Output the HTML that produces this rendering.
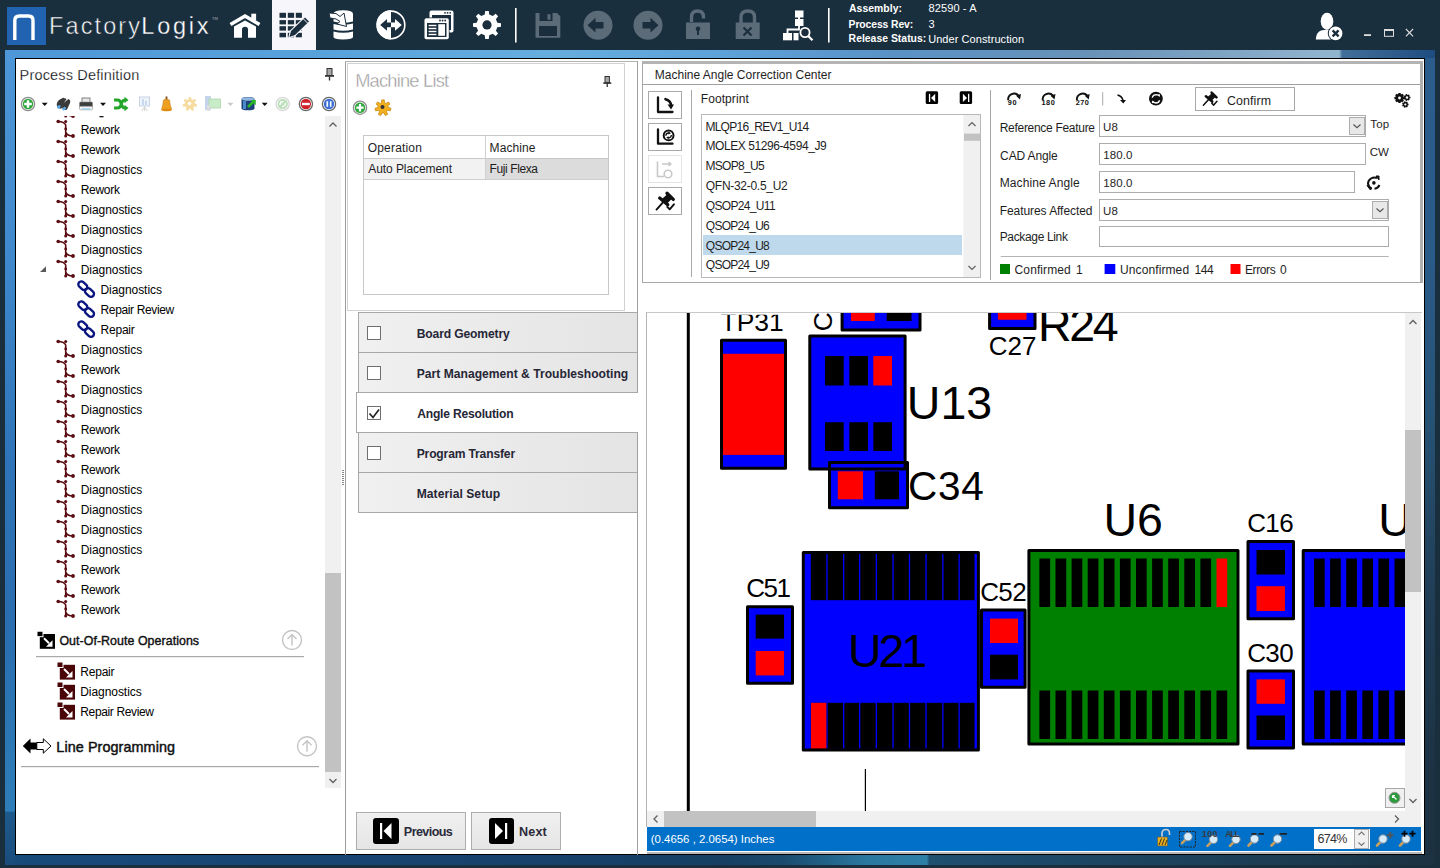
<!DOCTYPE html>
<html><head><meta charset="utf-8">
<style>
*{margin:0;padding:0;box-sizing:border-box}
html,body{width:1440px;height:868px;overflow:hidden;background:#1a2f3e;font-family:"Liberation Sans",sans-serif;font-size:12px;color:#1e1e1e;position:relative}
.a{position:absolute}
.t{position:absolute;white-space:nowrap}
svg{position:absolute;overflow:visible}
</style></head><body>
<div class="a" style="left:5px;top:50px;width:1430px;height:815px;background:linear-gradient(90deg,#4d97d8 0%,#58a2dc 22%,#66aede 38%,#5da2d9 50%,#5a92c6 62%,#6892b8 76%,#8db0cc 91%,#93b6d0 93.3%,#42709a 93.5%,#1f4c80 100%)"></div>
<div class="a" style="left:5px;top:58px;width:10px;height:807px;background:linear-gradient(180deg,#4d97d8 0%,#3f88cc 25%,#2f74b8 50%,#2a6eb0 70%,#2c78b4 85%,#2e7db8 93.3%,#1e5a8c 93.5%,#1a4c7c 100%)"></div>
<div class="a" style="left:1425px;top:58px;width:10px;height:807px;background:linear-gradient(180deg,#2c5c8c 0%,#2a5a88 25%,#265274 45%,#213f58 65%,#1d3446 85%,#1c3040 100%)"></div>
<div class="a" style="left:15px;top:855px;width:1420px;height:10px;background:linear-gradient(90deg,#184a7a 0%,#17436e 30%,#173f64 50%,#1a4a6e 54%,#2a78a0 60%,#2e80a8 64.2%,#1f5070 64.4%,#1d4a6a 70%,#1c4058 85%,#1c3242 100%)"></div>
<div class="a" style="left:15px;top:58px;width:1410px;height:797px;background:#fff;border:1px solid #000"></div>
<div class="a" style="left:7px;top:7px;width:39px;height:38px;background:#2163b0"></div>
<svg style="left:0;top:0" width="1440" height="50"><path d="M14.8 40 V20.5 Q14.8 16 19.5 16 H28.5 Q33 16 33 20.5 V40" fill="none" stroke="#fff" stroke-width="3.4"/><path d="M230.5 24.5 L245 16 L259.5 24.5" fill="none" stroke="#fff" stroke-width="3.6" stroke-linejoin="miter"/><rect x="251.3" y="13.7" width="4.8" height="6.5" fill="#fff"/><path d="M234 26.5 L245 20.5 L256 26.5 V37.8 H248 V29.5 Q248 26.8 245 26.8 Q242 26.8 242 29.5 V37.8 H234Z" fill="#fff"/><rect x="272" y="0" width="44" height="50" fill="#f7f7fb"/><rect x="279.5" y="12.8" width="6.5" height="5" fill="#1b2e3d"/><rect x="279.5" y="20.1" width="6.5" height="4.3" fill="#1b2e3d"/><rect x="279.5" y="26.2" width="6.5" height="4.4" fill="#1b2e3d"/><rect x="279.5" y="32.8" width="6.5" height="4.5" fill="#1b2e3d"/><rect x="287.8" y="12.8" width="6.3" height="5" fill="#1b2e3d"/><rect x="287.8" y="20.1" width="6.3" height="4.3" fill="#1b2e3d"/><rect x="287.8" y="26.2" width="6.3" height="4.4" fill="#1b2e3d"/><rect x="287.8" y="32.8" width="6.3" height="4.5" fill="#1b2e3d"/><rect x="295.8" y="12.8" width="6.1" height="5" fill="#1b2e3d"/><rect x="295.8" y="20.1" width="6.1" height="4.3" fill="#1b2e3d"/><rect x="295.8" y="26.2" width="6.1" height="4.4" fill="#1b2e3d"/><rect x="295.8" y="32.8" width="6.1" height="4.5" fill="#1b2e3d"/><path d="M289.5 37 L291 31 L305 17.5 L309 21.5 L295 35 Z" fill="#1b2e3d" stroke="#f7f7fb" stroke-width="2.2" stroke-linejoin="round"/><path d="M289.5 37 L291 31 L305 17.5 L309 21.5 L295 35 Z" fill="#1b2e3d"/><path d="M303.5 19 L307.5 23" stroke="#f7f7fb" stroke-width="1"/><path d="M333.5 14 Q333.5 10.3 343 10.3 Q353 10.3 353 14 V21.5 Q343 24 333.5 21.5 Z" fill="#fff"/><path d="M333.5 24 Q343 26 353 23.5 V29.5 Q343 32 333.5 29.5 Z" fill="#fff"/><path d="M333.5 31.5 Q343 34 353 31.5 V37 Q353 39.4 343 39.4 Q333.5 39.4 333.5 37 Z" fill="#fff"/><path d="M329 13 L336 13.5 L340 16.5 L344 13 L346.5 26.5 L337 24 L340 21.5 L336 19 L330 18 Z" fill="#fff" stroke="#1b2e3d" stroke-width="1"/><circle cx="391" cy="24.9" r="13.8" fill="#1b2e3d" stroke="#fff" stroke-width="1.6"/><path d="M391 10.3 A14.6 14.6 0 0 0 391 39.5 Z" fill="#fff"/><path d="M380.2 24.9 L387 19 V22.5 H391 V27.3 H387 V30.8 Z" fill="#1b2e3d"/><path d="M401.8 24.9 L395 19 V22.5 H391 V27.3 H395 V30.8 Z" fill="#fff"/><rect x="429.5" y="10.5" width="24" height="22" rx="2" fill="#fff"/><rect x="432" y="15" width="19" height="15" fill="#1b2e3d"/><circle cx="445" cy="12.8" r="0.9" fill="#1b2e3d"/><circle cx="447.6" cy="12.8" r="0.9" fill="#1b2e3d"/><circle cx="450.2" cy="12.8" r="0.9" fill="#1b2e3d"/><rect x="423.5" y="17.5" width="26" height="22.5" rx="2" fill="#1b2e3d"/><rect x="424.5" y="18.3" width="24.3" height="21" rx="1.8" fill="#fff"/><circle cx="440" cy="20.5" r="0.9" fill="#1b2e3d"/><circle cx="442.6" cy="20.5" r="0.9" fill="#1b2e3d"/><circle cx="445.2" cy="20.5" r="0.9" fill="#1b2e3d"/><rect x="427" y="23" width="19.5" height="14" fill="#1b2e3d"/><rect x="438.3" y="24.2" width="6.7" height="11.6" fill="#fff"/><rect x="428.6" y="24.8" width="7.8" height="1.4" fill="#fff"/><rect x="428.6" y="27.8" width="7.8" height="1.4" fill="#fff"/><rect x="428.6" y="30.8" width="7.8" height="1.4" fill="#fff"/><rect x="428.6" y="33.8" width="7.8" height="1.4" fill="#fff"/><path d="M497.36 22.67 L500.99 23.13 L500.99 26.67 L497.36 27.13 L495.90 30.65 L498.14 33.54 L495.64 36.04 L492.75 33.80 L489.23 35.26 L488.77 38.89 L485.23 38.89 L484.77 35.26 L481.25 33.80 L478.36 36.04 L475.86 33.54 L478.10 30.65 L476.64 27.13 L473.01 26.67 L473.01 23.13 L476.64 22.67 L478.10 19.15 L475.86 16.26 L478.36 13.76 L481.25 16.00 L484.77 14.54 L485.23 10.91 L488.77 10.91 L489.23 14.54 L492.75 16.00 L495.64 13.76 L498.14 16.26 L495.90 19.15Z" fill="#fff"/><circle cx="487" cy="24.9" r="4.6" fill="#1b2e3d"/><rect x="515" y="8" width="1.6" height="34.5" fill="#fff"/><path d="M535.5 13 H557 L560.3 16.3 V37.8 H535.5 Z" fill="#5b6b78"/><rect x="539.5" y="13" width="13" height="8" fill="#1b2e3d"/><rect x="547.5" y="14.2" width="3" height="5.6" fill="#5b6b78"/><rect x="539" y="26" width="18" height="10" fill="#1b2e3d"/><rect x="539" y="27" width="18" height="9" rx="0.5" fill="#1b2e3d"/><circle cx="598" cy="25.2" r="14.5" fill="#5b6b78"/><path d="M587.5 25.2 L595.5 17.8 V22 H603.5 V28.4 H595.5 V32.6 Z" fill="#1b2e3d"/><circle cx="648" cy="25.2" r="14.5" fill="#5b6b78"/><path d="M658.5 25.2 L650.5 17.8 V22 H642.5 V28.4 H650.5 V32.6 Z" fill="#1b2e3d"/><path d="M691.5 22 V17 Q691.5 11 697.5 11 Q703.5 11 703.5 17 V18.5" fill="none" stroke="#5b6b78" stroke-width="3.4"/><rect x="686" y="22.5" width="24" height="16.5" fill="#5b6b78"/><circle cx="698" cy="28.8" r="2.3" fill="#1b2e3d"/><rect x="697" y="29" width="2" height="6" fill="#1b2e3d"/><path d="M741 23 V17 Q741 11 747.8 11 Q754.5 11 754.5 17 V23" fill="none" stroke="#5b6b78" stroke-width="3.4"/><rect x="735.7" y="22.5" width="24" height="16.5" fill="#5b6b78"/><path d="M743.5 27.5 L751.5 35.5 M751.5 27.5 L743.5 35.5" stroke="#1b2e3d" stroke-width="2.2"/><rect x="795" y="10.5" width="8.5" height="7" fill="#fff"/><rect x="795" y="19" width="8.5" height="7" fill="#fff"/><rect x="798" y="17" width="2" height="3" fill="#fff"/><rect x="783" y="33" width="9" height="7.3" fill="#fff"/><rect x="793.5" y="33" width="5" height="7.3" fill="#fff"/><path d="M787.5 33 V29.5 H799 V26" fill="none" stroke="#fff" stroke-width="1.8"/><circle cx="805" cy="32.5" r="4.6" fill="#1b2e3d" stroke="#fff" stroke-width="1.8"/><path d="M808 35.8 L812.5 40.3" stroke="#fff" stroke-width="2.2"/><rect x="828" y="8" width="1.6" height="34.5" fill="#fff"/><ellipse cx="1327" cy="21.2" rx="6.3" ry="8.5" fill="#fff"/><path d="M1315.8 39.5 Q1316 32.5 1321 30.5 L1327 29.5 L1333 30.5 Q1337 32 1337.5 39.5 Z" fill="#fff"/><circle cx="1335.6" cy="33.4" r="7.8" fill="#1b2e3d"/><circle cx="1335.6" cy="33.4" r="6.8" fill="#fff"/><path d="M1332.6 30.4 L1338.6 36.4 M1338.6 30.4 L1332.6 36.4" stroke="#1b2e3d" stroke-width="2.3"/><rect x="1364" y="34.2" width="7" height="1.8" fill="#ddd"/><rect x="1384.5" y="29.5" width="9" height="6.8" fill="none" stroke="#ddd" stroke-width="1"/><rect x="1384" y="29" width="10" height="2" fill="#ddd"/><path d="M1405.9 29 L1413.1 36.3 M1413.1 29 L1405.9 36.3" stroke="#ddd" stroke-width="1.1"/></svg>
<div class="t" style="left:49.07px;top:15.11px;font-size:23.5px;line-height:23.5px;letter-spacing:2.104px;color:#fff;-webkit-text-stroke:0.55px #1b2e3d">Factory</div>
<div class="t" style="left:141.37px;top:15.11px;font-size:23.5px;line-height:23.5px;letter-spacing:2.743px;color:#fff;-webkit-text-stroke:0.3px #1b2e3d">Logix</div>
<div class="t" style="left:212px;top:17px;font-size:4px;line-height:4px;color:#aab">TM</div><div class="t" style="left:849.05px;top:3.80px;font-size:10.4px;line-height:10.4px;letter-spacing:0.043px;font-weight:bold;color:#fff">Assembly:</div>
<div class="t" style="left:848.61px;top:19.50px;font-size:10.4px;line-height:10.4px;letter-spacing:-0.111px;font-weight:bold;color:#fff">Process Rev:</div>
<div class="t" style="left:848.61px;top:34.40px;font-size:10.4px;line-height:10.4px;letter-spacing:0.016px;font-weight:bold;color:#fff">Release Status:</div>
<div class="t" style="left:928.53px;top:3.29px;font-size:11px;line-height:11px;letter-spacing:0.113px;color:#fff">82590 - A</div>
<div class="t" style="left:928.58px;top:18.99px;font-size:11px;line-height:11px;color:#fff">3</div>
<div class="t" style="left:928.15px;top:33.89px;font-size:11px;line-height:11px;letter-spacing:0.070px;color:#fff">Under Construction</div>
<div class="t" style="left:19.61px;top:67.73px;font-size:14.5px;line-height:14.5px;letter-spacing:0.162px;color:#000;-webkit-text-stroke:0.25px #fff">Process Definition</div>
<svg style="left:0;top:0" width="1" height="1"><rect x="327" y="68.5" width="5" height="7" fill="#a8a8a8" stroke="#333" stroke-width="1"/><rect x="325" y="75" width="9" height="1.8" fill="#333"/><rect x="328.8" y="76.5" width="1.4" height="4" fill="#333"/><circle cx="28" cy="104" r="6.6" fill="#fff" stroke="#8c8c8c" stroke-width="1.3"/><circle cx="28" cy="104" r="5.2" fill="#2ca53a"/><path d="M24.2 104 H31.8 M28 100.2 V107.8" stroke="#fff" stroke-width="2.4"/><path d="M41.7 102.8 H47.7 L44.7 106Z" fill="#111"/><path d="M100 102.8 H106 L103 106Z" fill="#111"/><path d="M261.7 102.8 H267.7 L264.7 106Z" fill="#111"/><path d="M227.5 102.8 H233.5 L230.5 106Z" fill="#c8c8c8"/><path d="M57 106 Q56 103 59 100 L63 97.8 Q66 98 65 101 L62 108 Q59 110 57 106Z" fill="#3a3a3a"/><path d="M62 108 Q62 104 66 101 L68.5 99 Q71 100 70 103 L67 109.5 Q64 111 62 108Z" fill="#3a3a3a"/><path d="M63 101 L66 99" stroke="#3a3a3a" stroke-width="2"/><ellipse cx="58.8" cy="106.8" rx="2" ry="1.5" fill="#5aa8e8" transform="rotate(-40 58.8 106.8)"/><ellipse cx="64.2" cy="108.6" rx="2" ry="1.5" fill="#5aa8e8" transform="rotate(-40 64.2 108.6)"/><rect x="82" y="98" width="8" height="4.5" fill="#e8e8e8" stroke="#666" stroke-width="0.8"/><rect x="79.5" y="102" width="13" height="5.5" rx="1" fill="#3c3c3c" stroke="#888" stroke-width="0.6"/><rect x="79.5" y="106.3" width="13" height="3.5" rx="1" fill="#f4f4f4" stroke="#888" stroke-width="0.6"/><rect x="82" y="108.2" width="8" height="1.4" fill="#9ad0f0"/><path d="M114 100 H117.5 Q120 100 121 103 L122 106 Q123 108 125 108 H126" fill="none" stroke="#22a52a" stroke-width="3"/><path d="M114 108 H117.5 Q120 108 121 105 L122 102 Q123 100 125 100 H126" fill="none" stroke="#22a52a" stroke-width="3"/><path d="M124.5 96.8 L128.5 100 L124.5 103.2Z M124.5 104.8 L128.5 108 L124.5 111.2Z" fill="#22a52a"/><rect x="139.5" y="97" width="10" height="9" fill="#eef3fa" stroke="#c8d4e6" stroke-width="1"/><rect x="142" y="99" width="2" height="6" fill="#c8d8ee"/><rect x="145" y="101" width="2" height="4" fill="#c8d8ee"/><path d="M144.5 106 V111 M141.5 111 L144.5 107 L147.5 111" stroke="#d4d4d4" fill="none"/><path d="M166.5 96.5 V100" stroke="#7a4a1a" stroke-width="1.8"/><path d="M163.5 100 Q166.5 98.5 169.5 100 Q170 106 171.7 109.5 H161.5 Q163 106 163.5 100Z" fill="#f0a020" stroke="#c87810" stroke-width="0.6"/><ellipse cx="166.6" cy="110" rx="5" ry="1.2" fill="#e08a10"/><path d="M188.4 99.2 L188.8 96.9 L191.0 96.9 L191.4 99.2 L192.7 99.9 L194.7 98.7 L196.2 100.5 L194.6 102.2 L194.9 103.6 L197.1 104.5 L196.6 106.7 L194.2 106.5 L193.3 107.7 L194.0 109.9 L192.0 110.9 L190.6 108.9 L189.2 108.9 L187.8 110.9 L185.8 109.9 L186.5 107.7 L185.6 106.5 L183.2 106.7 L182.7 104.5 L184.9 103.6 L185.2 102.2 L183.6 100.5 L185.1 98.7 L187.1 99.9Z" fill="#f6dca0"/><circle cx="189.5" cy="103.5" r="1.8" fill="#fff"/><rect x="205" y="96" width="6" height="14" fill="#c4d4ec"/><rect x="209" y="99" width="11.5" height="9" fill="#c8ecc8" stroke="#b0d4b0" stroke-width="0.8"/><rect x="207" y="105" width="3" height="6" fill="#ddd"/><path d="M241.5 99 Q241.5 97 248 97 Q254.5 97 254.5 99 V108.5 Q254.5 110.3 248 110.3 Q241.5 110.3 241.5 108.5Z" fill="#1d3f7a"/><ellipse cx="248" cy="99" rx="6.5" ry="1.8" fill="#8fb8e0"/><rect x="243" y="101" width="3" height="8" fill="#4a88c8"/><path d="M248 107 L253.5 101.5" stroke="#2ab52a" stroke-width="2.6"/><path d="M250.5 100 H255.8 V105.3Z" fill="#2ab52a"/><circle cx="282.7" cy="104" r="6.6" fill="#fff" stroke="#d8d8d8" stroke-width="1.3"/><circle cx="282.7" cy="104" r="5.2" fill="#bde0bd"/><path d="M280 105 Q280 101.5 283.5 101.5 M285.5 103 Q285.5 106.5 282 106.5" stroke="#fff" stroke-width="1.3" fill="none"/><circle cx="305.9" cy="104" r="6.6" fill="#fff" stroke="#6a6a6a" stroke-width="1.3"/><circle cx="305.9" cy="104" r="5.2" fill="#d0202a"/><rect x="302" y="102.8" width="7.8" height="2.4" fill="#fff"/><circle cx="329" cy="104" r="6.6" fill="#fff" stroke="#6a6a6a" stroke-width="1.3"/><circle cx="329" cy="104" r="5.2" fill="#3c70d8"/><path d="M327.3 101.2 V106.8 M330.7 101.2 V106.8" stroke="#fff" stroke-width="1.6"/></svg>
<div class="a" style="left:325px;top:116px;width:16px;height:672px;background:#f0f0f0"></div>
<div class="a" style="left:325px;top:573px;width:16px;height:199px;background:#c2c2c2"></div>
<svg style="left:0;top:0" width="1" height="1"><path d="M329.5 126.5 L333 123 L336.5 126.5" fill="none" stroke="#606060" stroke-width="1.3"/><path d="M329.5 779 L333 782.5 L336.5 779" fill="none" stroke="#606060" stroke-width="1.3"/><rect x="342" y="470" width="2" height="1" fill="#8a8a8a"/><rect x="342" y="472" width="2" height="1" fill="#8a8a8a"/><rect x="342" y="474" width="2" height="1" fill="#8a8a8a"/><rect x="342" y="476" width="2" height="1" fill="#8a8a8a"/><rect x="342" y="478" width="2" height="1" fill="#8a8a8a"/><rect x="342" y="480" width="2" height="1" fill="#8a8a8a"/><rect x="342" y="482" width="2" height="1" fill="#8a8a8a"/><rect x="342" y="484" width="2" height="1" fill="#8a8a8a"/></svg>
<div class="t" style="left:80.72px;top:123.59px;font-size:12px;line-height:12px;letter-spacing:-0.284px;color:#000">Rework</div>
<div class="t" style="left:80.72px;top:143.59px;font-size:12px;line-height:12px;letter-spacing:-0.284px;color:#000">Rework</div>
<div class="t" style="left:80.72px;top:163.59px;font-size:12px;line-height:12px;letter-spacing:-0.061px;color:#000">Diagnostics</div>
<div class="t" style="left:80.72px;top:183.59px;font-size:12px;line-height:12px;letter-spacing:-0.284px;color:#000">Rework</div>
<div class="t" style="left:80.72px;top:203.59px;font-size:12px;line-height:12px;letter-spacing:-0.061px;color:#000">Diagnostics</div>
<div class="t" style="left:80.72px;top:223.59px;font-size:12px;line-height:12px;letter-spacing:-0.061px;color:#000">Diagnostics</div>
<div class="t" style="left:80.72px;top:243.59px;font-size:12px;line-height:12px;letter-spacing:-0.061px;color:#000">Diagnostics</div>
<div class="t" style="left:80.72px;top:263.59px;font-size:12px;line-height:12px;letter-spacing:-0.061px;color:#000">Diagnostics</div>
<div class="t" style="left:100.52px;top:283.59px;font-size:12px;line-height:12px;letter-spacing:-0.061px;color:#000">Diagnostics</div>
<div class="t" style="left:100.52px;top:303.59px;font-size:12px;line-height:12px;letter-spacing:-0.365px;color:#000">Repair Review</div>
<div class="t" style="left:100.52px;top:323.59px;font-size:12px;line-height:12px;letter-spacing:-0.215px;color:#000">Repair</div>
<div class="t" style="left:80.72px;top:343.59px;font-size:12px;line-height:12px;letter-spacing:-0.061px;color:#000">Diagnostics</div>
<div class="t" style="left:80.72px;top:363.59px;font-size:12px;line-height:12px;letter-spacing:-0.284px;color:#000">Rework</div>
<div class="t" style="left:80.72px;top:383.59px;font-size:12px;line-height:12px;letter-spacing:-0.061px;color:#000">Diagnostics</div>
<div class="t" style="left:80.72px;top:403.59px;font-size:12px;line-height:12px;letter-spacing:-0.061px;color:#000">Diagnostics</div>
<div class="t" style="left:80.72px;top:423.59px;font-size:12px;line-height:12px;letter-spacing:-0.284px;color:#000">Rework</div>
<div class="t" style="left:80.72px;top:443.59px;font-size:12px;line-height:12px;letter-spacing:-0.284px;color:#000">Rework</div>
<div class="t" style="left:80.72px;top:463.59px;font-size:12px;line-height:12px;letter-spacing:-0.284px;color:#000">Rework</div>
<div class="t" style="left:80.72px;top:483.59px;font-size:12px;line-height:12px;letter-spacing:-0.061px;color:#000">Diagnostics</div>
<div class="t" style="left:80.72px;top:503.59px;font-size:12px;line-height:12px;letter-spacing:-0.061px;color:#000">Diagnostics</div>
<div class="t" style="left:80.72px;top:523.59px;font-size:12px;line-height:12px;letter-spacing:-0.061px;color:#000">Diagnostics</div>
<div class="t" style="left:80.72px;top:543.59px;font-size:12px;line-height:12px;letter-spacing:-0.061px;color:#000">Diagnostics</div>
<div class="t" style="left:80.72px;top:563.59px;font-size:12px;line-height:12px;letter-spacing:-0.284px;color:#000">Rework</div>
<div class="t" style="left:80.72px;top:583.59px;font-size:12px;line-height:12px;letter-spacing:-0.284px;color:#000">Rework</div>
<div class="t" style="left:80.72px;top:603.59px;font-size:12px;line-height:12px;letter-spacing:-0.284px;color:#000">Rework</div>
<svg style="left:0;top:0" width="1" height="1"><g><clipPath id="tc"><rect x="20" y="116" width="300" height="10"/></clipPath></g><g clip-path="url(#tc)"><g transform="translate(57,100)" fill="#5a0c10" stroke="#5a0c10"><path d="M1.2 1.5 Q7 1.6 8.7 5 V16 M8.7 12 Q10 16 16 16" fill="none" stroke-width="1.6"/><circle cx="1.2" cy="1.5" r="1.8" stroke="none"/><circle cx="8.7" cy="1.5" r="1.5" stroke="none"/><circle cx="8.7" cy="9" r="1.4" stroke="none"/><circle cx="8.7" cy="16" r="1.5" stroke="none"/><circle cx="16" cy="16" r="1.9" stroke="none"/></g></g><g transform="translate(57,120.0)" fill="#5a0c10" stroke="#5a0c10"><path d="M1.2 1.5 Q7 1.6 8.7 5 V16 M8.7 12 Q10 16 16 16" fill="none" stroke-width="1.6"/><circle cx="1.2" cy="1.5" r="1.8" stroke="none"/><circle cx="8.7" cy="1.5" r="1.5" stroke="none"/><circle cx="8.7" cy="9" r="1.4" stroke="none"/><circle cx="8.7" cy="16" r="1.5" stroke="none"/><circle cx="16" cy="16" r="1.9" stroke="none"/></g><g transform="translate(57,140.0)" fill="#5a0c10" stroke="#5a0c10"><path d="M1.2 1.5 Q7 1.6 8.7 5 V16 M8.7 12 Q10 16 16 16" fill="none" stroke-width="1.6"/><circle cx="1.2" cy="1.5" r="1.8" stroke="none"/><circle cx="8.7" cy="1.5" r="1.5" stroke="none"/><circle cx="8.7" cy="9" r="1.4" stroke="none"/><circle cx="8.7" cy="16" r="1.5" stroke="none"/><circle cx="16" cy="16" r="1.9" stroke="none"/></g><g transform="translate(57,160.0)" fill="#5a0c10" stroke="#5a0c10"><path d="M1.2 1.5 Q7 1.6 8.7 5 V16 M8.7 12 Q10 16 16 16" fill="none" stroke-width="1.6"/><circle cx="1.2" cy="1.5" r="1.8" stroke="none"/><circle cx="8.7" cy="1.5" r="1.5" stroke="none"/><circle cx="8.7" cy="9" r="1.4" stroke="none"/><circle cx="8.7" cy="16" r="1.5" stroke="none"/><circle cx="16" cy="16" r="1.9" stroke="none"/></g><g transform="translate(57,180.0)" fill="#5a0c10" stroke="#5a0c10"><path d="M1.2 1.5 Q7 1.6 8.7 5 V16 M8.7 12 Q10 16 16 16" fill="none" stroke-width="1.6"/><circle cx="1.2" cy="1.5" r="1.8" stroke="none"/><circle cx="8.7" cy="1.5" r="1.5" stroke="none"/><circle cx="8.7" cy="9" r="1.4" stroke="none"/><circle cx="8.7" cy="16" r="1.5" stroke="none"/><circle cx="16" cy="16" r="1.9" stroke="none"/></g><g transform="translate(57,200.0)" fill="#5a0c10" stroke="#5a0c10"><path d="M1.2 1.5 Q7 1.6 8.7 5 V16 M8.7 12 Q10 16 16 16" fill="none" stroke-width="1.6"/><circle cx="1.2" cy="1.5" r="1.8" stroke="none"/><circle cx="8.7" cy="1.5" r="1.5" stroke="none"/><circle cx="8.7" cy="9" r="1.4" stroke="none"/><circle cx="8.7" cy="16" r="1.5" stroke="none"/><circle cx="16" cy="16" r="1.9" stroke="none"/></g><g transform="translate(57,220.0)" fill="#5a0c10" stroke="#5a0c10"><path d="M1.2 1.5 Q7 1.6 8.7 5 V16 M8.7 12 Q10 16 16 16" fill="none" stroke-width="1.6"/><circle cx="1.2" cy="1.5" r="1.8" stroke="none"/><circle cx="8.7" cy="1.5" r="1.5" stroke="none"/><circle cx="8.7" cy="9" r="1.4" stroke="none"/><circle cx="8.7" cy="16" r="1.5" stroke="none"/><circle cx="16" cy="16" r="1.9" stroke="none"/></g><g transform="translate(57,240.0)" fill="#5a0c10" stroke="#5a0c10"><path d="M1.2 1.5 Q7 1.6 8.7 5 V16 M8.7 12 Q10 16 16 16" fill="none" stroke-width="1.6"/><circle cx="1.2" cy="1.5" r="1.8" stroke="none"/><circle cx="8.7" cy="1.5" r="1.5" stroke="none"/><circle cx="8.7" cy="9" r="1.4" stroke="none"/><circle cx="8.7" cy="16" r="1.5" stroke="none"/><circle cx="16" cy="16" r="1.9" stroke="none"/></g><g transform="translate(57,260.0)" fill="#5a0c10" stroke="#5a0c10"><path d="M1.2 1.5 Q7 1.6 8.7 5 V16 M8.7 12 Q10 16 16 16" fill="none" stroke-width="1.6"/><circle cx="1.2" cy="1.5" r="1.8" stroke="none"/><circle cx="8.7" cy="1.5" r="1.5" stroke="none"/><circle cx="8.7" cy="9" r="1.4" stroke="none"/><circle cx="8.7" cy="16" r="1.5" stroke="none"/><circle cx="16" cy="16" r="1.9" stroke="none"/></g><g transform="translate(77.5,280.1)" fill="none" stroke="#0b1580" stroke-width="2.4"><rect x="-5" y="-3" width="10" height="6" rx="3" transform="translate(5.3,5.6) rotate(42)"/><rect x="-5" y="-3" width="10" height="6" rx="3" transform="translate(12,12.4) rotate(42)"/></g><g transform="translate(77.5,300.1)" fill="none" stroke="#0b1580" stroke-width="2.4"><rect x="-5" y="-3" width="10" height="6" rx="3" transform="translate(5.3,5.6) rotate(42)"/><rect x="-5" y="-3" width="10" height="6" rx="3" transform="translate(12,12.4) rotate(42)"/></g><g transform="translate(77.5,320.1)" fill="none" stroke="#0b1580" stroke-width="2.4"><rect x="-5" y="-3" width="10" height="6" rx="3" transform="translate(5.3,5.6) rotate(42)"/><rect x="-5" y="-3" width="10" height="6" rx="3" transform="translate(12,12.4) rotate(42)"/></g><g transform="translate(57,340.0)" fill="#5a0c10" stroke="#5a0c10"><path d="M1.2 1.5 Q7 1.6 8.7 5 V16 M8.7 12 Q10 16 16 16" fill="none" stroke-width="1.6"/><circle cx="1.2" cy="1.5" r="1.8" stroke="none"/><circle cx="8.7" cy="1.5" r="1.5" stroke="none"/><circle cx="8.7" cy="9" r="1.4" stroke="none"/><circle cx="8.7" cy="16" r="1.5" stroke="none"/><circle cx="16" cy="16" r="1.9" stroke="none"/></g><g transform="translate(57,360.0)" fill="#5a0c10" stroke="#5a0c10"><path d="M1.2 1.5 Q7 1.6 8.7 5 V16 M8.7 12 Q10 16 16 16" fill="none" stroke-width="1.6"/><circle cx="1.2" cy="1.5" r="1.8" stroke="none"/><circle cx="8.7" cy="1.5" r="1.5" stroke="none"/><circle cx="8.7" cy="9" r="1.4" stroke="none"/><circle cx="8.7" cy="16" r="1.5" stroke="none"/><circle cx="16" cy="16" r="1.9" stroke="none"/></g><g transform="translate(57,380.0)" fill="#5a0c10" stroke="#5a0c10"><path d="M1.2 1.5 Q7 1.6 8.7 5 V16 M8.7 12 Q10 16 16 16" fill="none" stroke-width="1.6"/><circle cx="1.2" cy="1.5" r="1.8" stroke="none"/><circle cx="8.7" cy="1.5" r="1.5" stroke="none"/><circle cx="8.7" cy="9" r="1.4" stroke="none"/><circle cx="8.7" cy="16" r="1.5" stroke="none"/><circle cx="16" cy="16" r="1.9" stroke="none"/></g><g transform="translate(57,400.0)" fill="#5a0c10" stroke="#5a0c10"><path d="M1.2 1.5 Q7 1.6 8.7 5 V16 M8.7 12 Q10 16 16 16" fill="none" stroke-width="1.6"/><circle cx="1.2" cy="1.5" r="1.8" stroke="none"/><circle cx="8.7" cy="1.5" r="1.5" stroke="none"/><circle cx="8.7" cy="9" r="1.4" stroke="none"/><circle cx="8.7" cy="16" r="1.5" stroke="none"/><circle cx="16" cy="16" r="1.9" stroke="none"/></g><g transform="translate(57,420.0)" fill="#5a0c10" stroke="#5a0c10"><path d="M1.2 1.5 Q7 1.6 8.7 5 V16 M8.7 12 Q10 16 16 16" fill="none" stroke-width="1.6"/><circle cx="1.2" cy="1.5" r="1.8" stroke="none"/><circle cx="8.7" cy="1.5" r="1.5" stroke="none"/><circle cx="8.7" cy="9" r="1.4" stroke="none"/><circle cx="8.7" cy="16" r="1.5" stroke="none"/><circle cx="16" cy="16" r="1.9" stroke="none"/></g><g transform="translate(57,440.0)" fill="#5a0c10" stroke="#5a0c10"><path d="M1.2 1.5 Q7 1.6 8.7 5 V16 M8.7 12 Q10 16 16 16" fill="none" stroke-width="1.6"/><circle cx="1.2" cy="1.5" r="1.8" stroke="none"/><circle cx="8.7" cy="1.5" r="1.5" stroke="none"/><circle cx="8.7" cy="9" r="1.4" stroke="none"/><circle cx="8.7" cy="16" r="1.5" stroke="none"/><circle cx="16" cy="16" r="1.9" stroke="none"/></g><g transform="translate(57,460.0)" fill="#5a0c10" stroke="#5a0c10"><path d="M1.2 1.5 Q7 1.6 8.7 5 V16 M8.7 12 Q10 16 16 16" fill="none" stroke-width="1.6"/><circle cx="1.2" cy="1.5" r="1.8" stroke="none"/><circle cx="8.7" cy="1.5" r="1.5" stroke="none"/><circle cx="8.7" cy="9" r="1.4" stroke="none"/><circle cx="8.7" cy="16" r="1.5" stroke="none"/><circle cx="16" cy="16" r="1.9" stroke="none"/></g><g transform="translate(57,480.0)" fill="#5a0c10" stroke="#5a0c10"><path d="M1.2 1.5 Q7 1.6 8.7 5 V16 M8.7 12 Q10 16 16 16" fill="none" stroke-width="1.6"/><circle cx="1.2" cy="1.5" r="1.8" stroke="none"/><circle cx="8.7" cy="1.5" r="1.5" stroke="none"/><circle cx="8.7" cy="9" r="1.4" stroke="none"/><circle cx="8.7" cy="16" r="1.5" stroke="none"/><circle cx="16" cy="16" r="1.9" stroke="none"/></g><g transform="translate(57,500.0)" fill="#5a0c10" stroke="#5a0c10"><path d="M1.2 1.5 Q7 1.6 8.7 5 V16 M8.7 12 Q10 16 16 16" fill="none" stroke-width="1.6"/><circle cx="1.2" cy="1.5" r="1.8" stroke="none"/><circle cx="8.7" cy="1.5" r="1.5" stroke="none"/><circle cx="8.7" cy="9" r="1.4" stroke="none"/><circle cx="8.7" cy="16" r="1.5" stroke="none"/><circle cx="16" cy="16" r="1.9" stroke="none"/></g><g transform="translate(57,520.0)" fill="#5a0c10" stroke="#5a0c10"><path d="M1.2 1.5 Q7 1.6 8.7 5 V16 M8.7 12 Q10 16 16 16" fill="none" stroke-width="1.6"/><circle cx="1.2" cy="1.5" r="1.8" stroke="none"/><circle cx="8.7" cy="1.5" r="1.5" stroke="none"/><circle cx="8.7" cy="9" r="1.4" stroke="none"/><circle cx="8.7" cy="16" r="1.5" stroke="none"/><circle cx="16" cy="16" r="1.9" stroke="none"/></g><g transform="translate(57,540.0)" fill="#5a0c10" stroke="#5a0c10"><path d="M1.2 1.5 Q7 1.6 8.7 5 V16 M8.7 12 Q10 16 16 16" fill="none" stroke-width="1.6"/><circle cx="1.2" cy="1.5" r="1.8" stroke="none"/><circle cx="8.7" cy="1.5" r="1.5" stroke="none"/><circle cx="8.7" cy="9" r="1.4" stroke="none"/><circle cx="8.7" cy="16" r="1.5" stroke="none"/><circle cx="16" cy="16" r="1.9" stroke="none"/></g><g transform="translate(57,560.0)" fill="#5a0c10" stroke="#5a0c10"><path d="M1.2 1.5 Q7 1.6 8.7 5 V16 M8.7 12 Q10 16 16 16" fill="none" stroke-width="1.6"/><circle cx="1.2" cy="1.5" r="1.8" stroke="none"/><circle cx="8.7" cy="1.5" r="1.5" stroke="none"/><circle cx="8.7" cy="9" r="1.4" stroke="none"/><circle cx="8.7" cy="16" r="1.5" stroke="none"/><circle cx="16" cy="16" r="1.9" stroke="none"/></g><g transform="translate(57,580.0)" fill="#5a0c10" stroke="#5a0c10"><path d="M1.2 1.5 Q7 1.6 8.7 5 V16 M8.7 12 Q10 16 16 16" fill="none" stroke-width="1.6"/><circle cx="1.2" cy="1.5" r="1.8" stroke="none"/><circle cx="8.7" cy="1.5" r="1.5" stroke="none"/><circle cx="8.7" cy="9" r="1.4" stroke="none"/><circle cx="8.7" cy="16" r="1.5" stroke="none"/><circle cx="16" cy="16" r="1.9" stroke="none"/></g><g transform="translate(57,600.0)" fill="#5a0c10" stroke="#5a0c10"><path d="M1.2 1.5 Q7 1.6 8.7 5 V16 M8.7 12 Q10 16 16 16" fill="none" stroke-width="1.6"/><circle cx="1.2" cy="1.5" r="1.8" stroke="none"/><circle cx="8.7" cy="1.5" r="1.5" stroke="none"/><circle cx="8.7" cy="9" r="1.4" stroke="none"/><circle cx="8.7" cy="16" r="1.5" stroke="none"/><circle cx="16" cy="16" r="1.9" stroke="none"/></g><rect x="99.5" y="116" width="4" height="1.3" fill="#111"/><path d="M40 272 H46 V266.2Z" fill="#5a5a5a"/><g transform="translate(37,631.2)"><rect x="2.8" y="2.8" width="15.2" height="14.8" fill="#000"/><rect x="0" y="0" width="6" height="5.5" fill="#000" stroke="#fff" stroke-width="1"/><path d="M7 7 L12 12" stroke="#fff" stroke-width="2"/><path d="M15.5 9 V15.5 H9 Z" fill="#fff"/></g><circle cx="292" cy="640" r="9.5" fill="none" stroke="#c4c4c4" stroke-width="1.4"/><path d="M292 645.5 V634.5 M287.5 639 L292 634.5 L296.5 639" fill="none" stroke="#c4c4c4" stroke-width="1.4"/><rect x="36" y="656" width="268" height="1.2" fill="#a8a8a8"/><g transform="translate(57,662)"><rect x="2.8" y="2.8" width="15.2" height="14.8" fill="#4a0508"/><rect x="0" y="0" width="6" height="5.5" fill="#4a0508" stroke="#fff" stroke-width="1"/><path d="M7 7 L12 12" stroke="#fff" stroke-width="2"/><path d="M15.5 9 V15.5 H9 Z" fill="#fff"/></g><g transform="translate(57,682)"><rect x="2.8" y="2.8" width="15.2" height="14.8" fill="#4a0508"/><rect x="0" y="0" width="6" height="5.5" fill="#4a0508" stroke="#fff" stroke-width="1"/><path d="M7 7 L12 12" stroke="#fff" stroke-width="2"/><path d="M15.5 9 V15.5 H9 Z" fill="#fff"/></g><g transform="translate(57,702)"><rect x="2.8" y="2.8" width="15.2" height="14.8" fill="#4a0508"/><rect x="0" y="0" width="6" height="5.5" fill="#4a0508" stroke="#fff" stroke-width="1"/><path d="M7 7 L12 12" stroke="#fff" stroke-width="2"/><path d="M15.5 9 V15.5 H9 Z" fill="#fff"/></g><path d="M22.8 746 L30.5 738.6 V742.5 H37 V749.5 H30.5 V753.4Z" fill="#000"/><path d="M51 746 L43.3 738.8 V742.5 H36.8 V749.5 H43.3 V753.2Z" fill="#fff" stroke="#000" stroke-width="1"/><circle cx="307" cy="746.3" r="9.5" fill="none" stroke="#c4c4c4" stroke-width="1.4"/><path d="M307 751.8 V740.8 M302.5 745.3 L307 740.8 L311.5 745.3" fill="none" stroke="#c4c4c4" stroke-width="1.4"/><rect x="21" y="766" width="298" height="1.2" fill="#a8a8a8"/></svg>
<div class="t" style="left:59.42px;top:634.50px;font-size:12.4px;line-height:12.4px;letter-spacing:0.055px;color:#101010;-webkit-text-stroke:0.4px #101010">Out-Of-Route Operations</div>
<div class="t" style="left:80.27px;top:665.59px;font-size:12px;line-height:12px;letter-spacing:-0.215px;color:#000">Repair</div>
<div class="t" style="left:80.27px;top:685.59px;font-size:12px;line-height:12px;letter-spacing:-0.061px;color:#000">Diagnostics</div>
<div class="t" style="left:80.27px;top:705.59px;font-size:12px;line-height:12px;letter-spacing:-0.365px;color:#000">Repair Review</div>
<div class="t" style="left:56.32px;top:739.81px;font-size:14.4px;line-height:14.4px;letter-spacing:0.077px;color:#101010;-webkit-text-stroke:0.45px #101010">Line Programming</div>
<div class="a" style="left:345px;top:61px;width:1px;height:794px;background:#9c9c9c"></div>
<div class="a" style="left:345px;top:61px;width:293px;height:1px;background:#b4b4b4"></div>
<div class="a" style="left:347px;top:63px;width:278px;height:248px;border:1px solid #d2d2d2"></div>
<div class="t" style="left:355.20px;top:71.71px;font-size:18.3px;line-height:18.3px;letter-spacing:-0.792px;color:#9a9a9a;-webkit-text-stroke:0.35px #fff">Machine List</div>
<svg style="left:0;top:0" width="1" height="1"><rect x="605" y="76.5" width="4.4" height="6" fill="#a8a8a8" stroke="#333" stroke-width="1"/><rect x="603.3" y="82.3" width="8" height="1.6" fill="#333"/><rect x="606.6" y="83.5" width="1.3" height="3.5" fill="#333"/><circle cx="360" cy="107.7" r="6.6" fill="#fff" stroke="#8c8c8c" stroke-width="1.3"/><circle cx="360" cy="107.7" r="5.2" fill="#2ca53a"/><path d="M356.3 107.7 H363.7 M360 104 V111.4" stroke="#fff" stroke-width="2.3"/><path d="M381.5 102.8 L381.7 99.9 L384.3 99.9 L384.5 102.8 L385.9 103.5 L388.4 101.9 L390.0 103.9 L387.8 105.9 L388.2 107.4 L391.0 108.3 L390.4 110.8 L387.5 110.4 L386.5 111.6 L387.6 114.4 L385.3 115.5 L383.8 112.9 L382.2 112.9 L380.7 115.5 L378.4 114.4 L379.5 111.6 L378.5 110.4 L375.6 110.8 L375.0 108.3 L377.8 107.4 L378.2 105.9 L376.0 103.9 L377.6 101.9 L380.1 103.5Z" fill="#f0b020" stroke="#c88a10" stroke-width="0.8"/><circle cx="382.5" cy="107" r="2" fill="#333"/></svg>
<div class="a" style="left:363px;top:135px;width:246px;height:160px;border:1px solid #c8c8c8;background:#fff"></div>
<div class="a" style="left:364px;top:158px;width:121px;height:21px;background:#f2f2f2"></div>
<div class="a" style="left:486px;top:158px;width:122px;height:21px;background:#dcdcdc"></div>
<div class="a" style="left:364px;top:158px;width:244px;height:1px;background:#c8c8c8"></div>
<div class="a" style="left:364px;top:179px;width:244px;height:1px;background:#cfcfcf"></div>
<div class="a" style="left:485px;top:136px;width:1px;height:43px;background:#d0d0d0"></div>
<div class="t" style="left:367.74px;top:141.54px;font-size:12px;line-height:12px;letter-spacing:0.180px;color:#1e1e1e">Operation</div>
<div class="t" style="left:489.62px;top:141.54px;font-size:12px;line-height:12px;letter-spacing:0.092px;color:#1e1e1e">Machine</div>
<div class="t" style="left:368.28px;top:163.44px;font-size:12px;line-height:12px;letter-spacing:-0.078px;color:#1e1e1e">Auto Placement</div>
<div class="t" style="left:489.62px;top:163.44px;font-size:12px;line-height:12px;letter-spacing:-0.404px;color:#1e1e1e">Fuji Flexa</div>
<div class="a" style="left:358px;top:312px;width:280px;height:41px;background:linear-gradient(90deg,#f0f0f0,#e4e4e4);border:1px solid #a8a8a8;border-right:none"></div>
<div class="a" style="left:358px;top:352px;width:280px;height:41px;background:linear-gradient(90deg,#f0f0f0,#e4e4e4);border:1px solid #a8a8a8;border-right:none"></div>
<div class="a" style="left:356px;top:392px;width:282px;height:41px;background:#fff;border:1px solid #a8a8a8;border-right:none"></div>
<div class="a" style="left:358px;top:432px;width:280px;height:41px;background:linear-gradient(90deg,#f0f0f0,#e4e4e4);border:1px solid #a8a8a8;border-right:none"></div>
<div class="a" style="left:358px;top:472px;width:280px;height:41px;background:linear-gradient(90deg,#f0f0f0,#e4e4e4);border:1px solid #a8a8a8;border-right:none"></div>
<div class="a" style="left:367px;top:326px;width:14px;height:14px;border:1px solid #6e6e6e;background:#fff"></div>
<div class="t" style="left:416.70px;top:327.66px;font-size:12.1px;line-height:12.1px;letter-spacing:-0.126px;font-weight:bold;color:#262636">Board Geometry</div>
<div class="a" style="left:367px;top:366px;width:14px;height:14px;border:1px solid #6e6e6e;background:#fff"></div>
<div class="t" style="left:416.70px;top:367.66px;font-size:12.1px;line-height:12.1px;letter-spacing:0.016px;font-weight:bold;color:#262636">Part Management &amp; Troubleshooting</div>
<div class="a" style="left:367px;top:406px;width:14px;height:14px;border:1px solid #6e6e6e;background:#fff"></div>
<div class="t" style="left:417.21px;top:407.66px;font-size:12.1px;line-height:12.1px;letter-spacing:-0.203px;font-weight:bold;color:#262636">Angle Resolution</div>
<div class="a" style="left:367px;top:446px;width:14px;height:14px;border:1px solid #6e6e6e;background:#fff"></div>
<div class="t" style="left:416.70px;top:447.66px;font-size:12.1px;line-height:12.1px;letter-spacing:-0.160px;font-weight:bold;color:#262636">Program Transfer</div>
<div class="t" style="left:416.70px;top:487.66px;font-size:12.1px;line-height:12.1px;letter-spacing:0.053px;font-weight:bold;color:#262636">Material Setup</div>
<svg style="left:0;top:0" width="1" height="1"><path d="M369.5 413.5 L373 417.5 L379 409.5" fill="none" stroke="#222" stroke-width="1.7"/></svg>
<div class="a" style="left:637px;top:61px;width:1px;height:332px;background:#a0a0a0"></div>
<div class="a" style="left:637px;top:432px;width:1px;height:423px;background:#a0a0a0"></div>
<div class="a" style="left:356px;top:812px;width:110px;height:38px;background:linear-gradient(180deg,#f0f0f0,#e5e5e5);border:1px solid #adadad"></div>
<div class="a" style="left:471px;top:812px;width:90px;height:38px;background:linear-gradient(180deg,#f0f0f0,#e5e5e5);border:1px solid #adadad"></div>
<svg style="left:0;top:0" width="1" height="1"><rect x="373" y="818" width="26" height="26" rx="3" fill="#000"/><rect x="380" y="823" width="2.2" height="16" fill="#fff"/><path d="M391.5 823 V839 L383.5 831Z" fill="#fff"/><rect x="489" y="818" width="25" height="26" rx="3" fill="#000"/><rect x="505" y="823" width="2.2" height="16" fill="#fff"/><path d="M495 823 V839 L503 831Z" fill="#fff"/></svg>
<div class="t" style="left:403.87px;top:826.13px;font-size:12.6px;line-height:12.6px;letter-spacing:-0.598px;font-weight:bold;color:#2b2b3b">Previous</div>
<div class="t" style="left:519.07px;top:826.13px;font-size:12.6px;line-height:12.6px;letter-spacing:0.126px;font-weight:bold;color:#2b2b3b">Next</div>
<div class="a" style="left:642px;top:61px;width:781px;height:222px;background:#fff;border:1px solid #a8a8a8;border-top:3px solid #b4b4b4;border-right:3px solid #b0b0b0"></div>
<div class="a" style="left:643px;top:84px;width:777px;height:1px;background:#a0a0a0"></div>
<div class="t" style="left:654.82px;top:68.84px;font-size:12px;line-height:12px;letter-spacing:-0.003px;color:#1e1e1e">Machine Angle Correction Center</div>
<svg style="left:0;top:0" width="1" height="1"><rect x="648.5" y="91.5" width="33" height="27" fill="#fff" stroke="#a8a8a8" stroke-width="1"/><rect x="648.5" y="123.5" width="33" height="27" fill="#fff" stroke="#a8a8a8" stroke-width="1"/><rect x="648.5" y="155.5" width="33" height="27" fill="#fff" stroke="#e4e4e4" stroke-width="1"/><rect x="648.5" y="187.5" width="33" height="27" fill="#fff" stroke="#a8a8a8" stroke-width="1"/><path d="M658 97.5 V112 H672.5" fill="none" stroke="#111" stroke-width="2.3" stroke-linecap="round" stroke-linejoin="round"/><path d="M665.5 99.2 Q670.5 100.5 671.2 105.5" fill="none" stroke="#111" stroke-width="2.6" stroke-linecap="round"/><path d="M667.6 104.6 H674 L671 109.6Z" fill="#111"/><path d="M658 129.5 V143.7 H672.5" fill="none" stroke="#111" stroke-width="2.3" stroke-linecap="round" stroke-linejoin="round"/><circle cx="668.6" cy="135.4" r="4.9" fill="none" stroke="#111" stroke-width="2"/><path d="M665.8 135.8 Q666 132.8 669.2 133 M671.4 135 Q671.2 138 668 137.8" fill="none" stroke="#111" stroke-width="1.3"/><path d="M668.5 131.5 L671 133.2 L668.5 134.6Z M668.7 139.3 L666.2 137.6 L668.7 136.2Z" fill="#111"/><path d="M657.5 161.5 V176.5 H664" fill="none" stroke="#c8c8c8" stroke-width="1.6"/><path d="M662 164 H671 M668.5 162 L671 164 L668.5 166" fill="none" stroke="#c8c8c8" stroke-width="1.3"/><circle cx="668" cy="174" r="3.8" fill="none" stroke="#c8c8c8" stroke-width="1.6"/><g transform="translate(656,192.5) scale(1.28)" fill="#111" stroke="#111" stroke-linecap="round" stroke-linejoin="round"><path d="M0.4 13.3 L5.6 7.5" stroke-width="1.5" fill="none"/><path d="M2.9 4.3 L9.2 9.6" stroke-width="2.6" fill="none"/><path d="M5 5.5 L9 2 L12 4.5 L8 8.5Z" stroke-width="1.2"/><path d="M8.6 0.6 L13.5 5.4" stroke-width="2.6" fill="none"/><path d="M8.8 11.2 L10.7 13.1 L14 9.2" stroke-width="1.5" fill="none"/></g><rect x="691" y="90" width="1" height="187" fill="#a8a8a8"/><rect x="990" y="90" width="1" height="190" fill="#a8a8a8"/><rect x="925.7" y="91.3" width="12.4" height="12.7" rx="1.5" fill="#000"/><rect x="928.9" y="93.8" width="1.3" height="8.2" fill="#fff"/><path d="M935.2 93.8 V102 L931 97.9Z" fill="#fff"/><rect x="959.7" y="91.3" width="12.4" height="12.7" rx="1.5" fill="#000"/><rect x="968" y="93.8" width="1.3" height="8.2" fill="#fff"/><path d="M962.9 93.8 V102 L967 97.9Z" fill="#fff"/><rect x="701.5" y="114.5" width="279" height="163" fill="#fff" stroke="#b8b8b8" stroke-width="1"/><rect x="963.5" y="115" width="16.5" height="162" fill="#f0f0f0"/><rect x="964" y="133.6" width="16" height="7.2" fill="#c2c2c2"/><path d="M968.5 126 L972 122.5 L975.5 126" fill="none" stroke="#606060" stroke-width="1.2"/><path d="M968.5 266 L972 269.5 L975.5 266" fill="none" stroke="#606060" stroke-width="1.2"/><rect x="703" y="235" width="259" height="20" fill="#bed8ec"/><path d="M1008.1999999999999 100.1 A5.9 5.9 0 0 1 1018.4 95.5" fill="none" stroke="#111" stroke-width="1.9"/><path d="M1016.0 95.7 L1021.0 94.1 L1020.0 99.5Z" fill="#111"/><path d="M1042.7 100.1 A5.9 5.9 0 0 1 1052.8999999999999 95.5" fill="none" stroke="#111" stroke-width="1.9"/><path d="M1050.5 95.7 L1055.5 94.1 L1054.5 99.5Z" fill="#111"/><path d="M1076.9 100.1 A5.9 5.9 0 0 1 1087.1 95.5" fill="none" stroke="#111" stroke-width="1.9"/><path d="M1084.7 95.7 L1089.7 94.1 L1088.7 99.5Z" fill="#111"/><rect x="1102.2" y="92.2" width="1" height="13.3" fill="#a8a8a8"/><path d="M1117.5 95 Q1122 96 1123 100.5" fill="none" stroke="#111" stroke-width="1.6"/><path d="M1120 100 H1126 L1123.3 103.5Z" fill="#111"/><circle cx="1155.9" cy="98.7" r="6.9" fill="#111"/><path d="M1152.2 97.6 Q1153 94.6 1156.2 94.6 Q1158.2 94.8 1159 96" fill="none" stroke="#fff" stroke-width="1.3"/><path d="M1157.8 94.6 L1160 94.2 L1159.7 97.2Z" fill="#fff"/><path d="M1159.6 100.2 Q1158.8 103 1155.8 103 Q1153.6 102.8 1152.8 101.4" fill="none" stroke="#fff" stroke-width="1.3"/><path d="M1154 102.8 L1151.8 103.2 L1152.2 100.2Z" fill="#fff"/><rect x="1195.5" y="87.5" width="99" height="23" fill="#fff" stroke="#a8a8a8" stroke-width="1"/><g transform="translate(1203,92) scale(1.0)" fill="#111" stroke="#111" stroke-linecap="round" stroke-linejoin="round"><path d="M0.4 13.3 L5.6 7.5" stroke-width="1.5" fill="none"/><path d="M2.9 4.3 L9.2 9.6" stroke-width="2.6" fill="none"/><path d="M5 5.5 L9 2 L12 4.5 L8 8.5Z" stroke-width="1.2"/><path d="M8.6 0.6 L13.5 5.4" stroke-width="2.6" fill="none"/><path d="M8.8 11.2 L10.7 13.1 L14 9.2" stroke-width="1.5" fill="none"/></g><path d="M1402.97 96.45 L1404.60 96.97 L1404.60 99.03 L1402.97 99.55 L1403.05 99.36 L1403.83 100.87 L1402.37 102.33 L1400.86 101.55 L1401.05 101.47 L1400.53 103.10 L1398.47 103.10 L1397.95 101.47 L1398.14 101.55 L1396.63 102.33 L1395.17 100.87 L1395.95 99.36 L1396.03 99.55 L1394.40 99.03 L1394.40 96.97 L1396.03 96.45 L1395.95 96.64 L1395.17 95.13 L1396.63 93.67 L1398.14 94.45 L1397.95 94.53 L1398.47 92.90 L1400.53 92.90 L1401.05 94.53 L1400.86 94.45 L1402.37 93.67 L1403.83 95.13 L1403.05 96.64Z" fill="#111"/><circle cx="1399.5" cy="98" r="1.4" fill="#fff"/><path d="M1409.28 96.48 L1410.43 96.80 L1410.43 98.20 L1409.28 98.52 L1409.22 98.65 L1409.68 99.75 L1408.60 100.62 L1407.63 99.92 L1407.49 99.95 L1406.91 101.00 L1405.56 100.69 L1405.50 99.50 L1405.39 99.41 L1404.21 99.61 L1403.61 98.36 L1404.50 97.57 L1404.50 97.43 L1403.61 96.64 L1404.21 95.39 L1405.39 95.59 L1405.50 95.50 L1405.56 94.31 L1406.91 94.00 L1407.49 95.05 L1407.63 95.08 L1408.60 94.38 L1409.68 95.25 L1409.22 96.35Z" fill="#111"/><circle cx="1407" cy="97.5" r="1.2" fill="#fff"/><path d="M1407.49 103.52 L1408.53 103.84 L1408.53 105.16 L1407.49 105.48 L1407.43 105.60 L1407.83 106.62 L1406.80 107.44 L1405.90 106.82 L1405.77 106.85 L1405.22 107.80 L1403.94 107.51 L1403.86 106.42 L1403.75 106.33 L1402.67 106.49 L1402.10 105.31 L1402.90 104.57 L1402.90 104.43 L1402.10 103.69 L1402.67 102.51 L1403.75 102.67 L1403.86 102.58 L1403.94 101.49 L1405.22 101.20 L1405.77 102.15 L1405.90 102.18 L1406.80 101.56 L1407.83 102.38 L1407.43 103.40Z" fill="#111"/><circle cx="1405.3" cy="104.5" r="1.1" fill="#fff"/><rect x="1099.5" y="115.5" width="266" height="21" fill="#fff" stroke="#acacac" stroke-width="1"/><rect x="1349.5" y="117.5" width="15" height="17" fill="#e8e8e8" stroke="#adadad" stroke-width="1"/><path d="M1353.5 124.5 L1357 127.8 L1360.5 124.5" fill="none" stroke="#555" stroke-width="1.2"/><rect x="1099.5" y="143.5" width="266" height="21" fill="#fff" stroke="#acacac" stroke-width="1"/><rect x="1099.5" y="171.5" width="255" height="21" fill="#fff" stroke="#acacac" stroke-width="1"/><rect x="1099.5" y="199.5" width="289" height="21" fill="#fff" stroke="#acacac" stroke-width="1"/><rect x="1372.5" y="201.5" width="15" height="17" fill="#e8e8e8" stroke="#adadad" stroke-width="1"/><path d="M1376.5 208.5 L1380 211.8 L1383.5 208.5" fill="none" stroke="#555" stroke-width="1.2"/><rect x="1099.5" y="226.5" width="289" height="20" fill="#fff" stroke="#acacac" stroke-width="1"/><path d="M1377 178 Q1374 176.8 1371 178.5 Q1368 180.5 1368 183.5 Q1368.5 187.2 1371.5 188.5 M1374.5 188.7 Q1378 188.2 1379.5 185" fill="none" stroke="#111" stroke-width="2"/><path d="M1376 176 L1379 176 L1379 180Z M1367 185.5 L1372 188.5 L1370.2 189.8Z" fill="#111" stroke="#111" stroke-width="1"/><circle cx="1373.9" cy="182.9" r="1.8" fill="#111"/><rect x="1000.7" y="256" width="388" height="1" fill="#b4b4b4"/><rect x="1000" y="264" width="10" height="10" fill="#008000"/><rect x="1104.6" y="264" width="10.7" height="10" fill="#0000ff"/><rect x="1230.5" y="264" width="10" height="10" fill="#ff0000"/></svg>
<div class="t" style="left:1007.75px;top:99.22px;font-size:7.3px;line-height:7.3px;letter-spacing:0.623px;font-weight:bold;color:#111">90</div>
<div class="t" style="left:1041.55px;top:99.22px;font-size:7.3px;line-height:7.3px;letter-spacing:0.484px;font-weight:bold;color:#111">180</div>
<div class="t" style="left:1075.75px;top:99.22px;font-size:7.3px;line-height:7.3px;letter-spacing:0.432px;font-weight:bold;color:#111">270</div>
<div class="t" style="left:700.72px;top:92.64px;font-size:12px;line-height:12px;letter-spacing:0.090px;color:#1e1e1e">Footprint</div>
<div class="t" style="left:705.42px;top:120.54px;font-size:12px;line-height:12px;letter-spacing:-0.731px;color:#1e1e1e">MLQP16_REV1_U14</div>
<div class="t" style="left:705.42px;top:140.39px;font-size:12px;line-height:12px;letter-spacing:-0.417px;color:#1e1e1e">MOLEX 51296-4594_J9</div>
<div class="t" style="left:705.42px;top:160.24px;font-size:12px;line-height:12px;letter-spacing:-0.678px;color:#1e1e1e">MSOP8_U5</div>
<div class="t" style="left:705.84px;top:180.09px;font-size:12px;line-height:12px;letter-spacing:-0.292px;color:#1e1e1e">QFN-32-0.5_U2</div>
<div class="t" style="left:705.84px;top:199.94px;font-size:12px;line-height:12px;letter-spacing:-0.675px;color:#1e1e1e">QSOP24_U11</div>
<div class="t" style="left:705.84px;top:219.79px;font-size:12px;line-height:12px;letter-spacing:-0.769px;color:#1e1e1e">QSOP24_U6</div>
<div class="t" style="left:705.84px;top:239.64px;font-size:12px;line-height:12px;letter-spacing:-0.769px;color:#1e1e1e">QSOP24_U8</div>
<div class="t" style="left:705.84px;top:259.49px;font-size:12px;line-height:12px;letter-spacing:-0.763px;color:#1e1e1e">QSOP24_U9</div>
<div class="t" style="left:1227.08px;top:94.50px;font-size:12.4px;line-height:12.4px;letter-spacing:0.086px;color:#1e1e1e">Confirm</div>
<div class="t" style="left:999.72px;top:121.84px;font-size:12px;line-height:12px;letter-spacing:-0.296px;color:#1e1e1e">Reference Feature</div>
<div class="t" style="left:1000.10px;top:149.84px;font-size:12px;line-height:12px;letter-spacing:-0.133px;color:#1e1e1e">CAD Angle</div>
<div class="t" style="left:999.72px;top:177.44px;font-size:12px;line-height:12px;letter-spacing:0.108px;color:#1e1e1e">Machine Angle</div>
<div class="t" style="left:999.72px;top:205.34px;font-size:12px;line-height:12px;letter-spacing:-0.068px;color:#1e1e1e">Features Affected</div>
<div class="t" style="left:999.72px;top:231.44px;font-size:12px;line-height:12px;letter-spacing:-0.353px;color:#1e1e1e">Package Link</div>
<div class="t" style="left:1103.11px;top:122.27px;font-size:11.5px;line-height:11.5px;color:#1e1e1e">U8</div>
<div class="t" style="left:1103.13px;top:150.27px;font-size:11.5px;line-height:11.5px;letter-spacing:0.135px;color:#1e1e1e">180.0</div>
<div class="t" style="left:1103.13px;top:178.27px;font-size:11.5px;line-height:11.5px;letter-spacing:0.135px;color:#1e1e1e">180.0</div>
<div class="t" style="left:1103.11px;top:206.27px;font-size:11.5px;line-height:11.5px;color:#1e1e1e">U8</div>
<div class="t" style="left:1370.15px;top:119.17px;font-size:11.5px;line-height:11.5px;letter-spacing:0.243px;color:#1e1e1e">Top</div>
<div class="t" style="left:1369.83px;top:146.67px;font-size:11.5px;line-height:11.5px;letter-spacing:-0.249px;color:#1e1e1e">CW</div>
<div class="t" style="left:1014.60px;top:263.84px;font-size:12px;line-height:12px;letter-spacing:0.101px;color:#1e1e1e">Confirmed</div>
<div class="t" style="left:1075.99px;top:263.84px;font-size:12px;line-height:12px;color:#1e1e1e">1</div>
<div class="t" style="left:1120.08px;top:263.84px;font-size:12px;line-height:12px;letter-spacing:0.096px;color:#1e1e1e">Unconfirmed</div>
<div class="t" style="left:1194.49px;top:263.84px;font-size:12px;line-height:12px;letter-spacing:-0.428px;color:#1e1e1e">144</div>
<div class="t" style="left:1245.02px;top:263.84px;font-size:12px;line-height:12px;letter-spacing:-0.410px;color:#1e1e1e">Errors</div>
<div class="t" style="left:1279.93px;top:263.84px;font-size:12px;line-height:12px;color:#1e1e1e">0</div>
<div class="a" style="left:646px;top:312px;width:776px;height:515px;background:#fff;border-left:1px solid #b4b4b4;border-top:1px solid #c8c8c8"></div>
<svg style="left:0;top:0" width="1440" height="868"><defs><clipPath id="cv"><rect x="647" y="313" width="758" height="498"/></clipPath><clipPath id="cv2"><rect x="647" y="314.8" width="758" height="498"/></clipPath></defs><g clip-path="url(#cv)"><rect x="686.8" y="300" width="3.0" height="511" fill="#000"/><rect x="864.8" y="769" width="1.2000000000000455" height="42" fill="#000"/><rect x="721.5" y="340.3" width="64" height="128.0" fill="#0000ff"/><rect x="723" y="353.8" width="61" height="101.09999999999997" fill="#ff0000"/><rect x="842.1" y="291.5" width="77.89999999999998" height="38.39999999999998" fill="#0000ff"/><rect x="851" y="300" width="23.799999999999955" height="21" fill="#ff0000"/><rect x="886.7" y="300" width="24.799999999999955" height="21" fill="#000"/><rect x="809.8" y="336.0" width="95.30000000000007" height="132.89999999999998" fill="#0000ff"/><rect x="825" y="356" width="18.700000000000045" height="29.5" fill="#000"/><rect x="849.3" y="356" width="18.700000000000045" height="29.5" fill="#000"/><rect x="873.3" y="356" width="18.700000000000045" height="29.5" fill="#ff0000"/><rect x="825" y="422.2" width="18.700000000000045" height="28.80000000000001" fill="#000"/><rect x="849.3" y="422.2" width="18.700000000000045" height="28.80000000000001" fill="#000"/><rect x="873.3" y="422.2" width="18.700000000000045" height="28.80000000000001" fill="#000"/><rect x="829.5" y="462.5" width="78" height="45.30000000000001" fill="#0000ff"/><rect x="837.8" y="471.3" width="25.200000000000045" height="28.0" fill="#ff0000"/><rect x="874.8" y="471.3" width="24.200000000000045" height="28.0" fill="#000"/><rect x="989.6" y="291.5" width="45.39999999999998" height="37" fill="#0000ff"/><rect x="997.9" y="300" width="28.600000000000023" height="19.75" fill="#ff0000"/><rect x="803.3" y="552.5" width="175.10000000000002" height="197.5" fill="#0000ff"/><rect x="810.8" y="553.5" width="163.70000000000005" height="46.700000000000045" fill="#000"/><rect x="810.8" y="702.8" width="163.70000000000005" height="46.0" fill="#000"/><rect x="826.3" y="553.5" width="1.3000000000000682" height="46.700000000000045" fill="#0000ff"/><rect x="826.3" y="702.8" width="1.3000000000000682" height="46.0" fill="#0000ff"/><rect x="843.0" y="553.5" width="1.3000000000000682" height="46.700000000000045" fill="#0000ff"/><rect x="843.0" y="702.8" width="1.3000000000000682" height="46.0" fill="#0000ff"/><rect x="859.0" y="553.5" width="1.3000000000000682" height="46.700000000000045" fill="#0000ff"/><rect x="859.0" y="702.8" width="1.3000000000000682" height="46.0" fill="#0000ff"/><rect x="875.6999999999999" y="553.5" width="1.3000000000000682" height="46.700000000000045" fill="#0000ff"/><rect x="875.6999999999999" y="702.8" width="1.3000000000000682" height="46.0" fill="#0000ff"/><rect x="892.4" y="553.5" width="1.3000000000000682" height="46.700000000000045" fill="#0000ff"/><rect x="892.4" y="702.8" width="1.3000000000000682" height="46.0" fill="#0000ff"/><rect x="908.8" y="553.5" width="1.3000000000000682" height="46.700000000000045" fill="#0000ff"/><rect x="908.8" y="702.8" width="1.3000000000000682" height="46.0" fill="#0000ff"/><rect x="925.4" y="553.5" width="1.3000000000000682" height="46.700000000000045" fill="#0000ff"/><rect x="925.4" y="702.8" width="1.3000000000000682" height="46.0" fill="#0000ff"/><rect x="942.1999999999999" y="553.5" width="1.3000000000000682" height="46.700000000000045" fill="#0000ff"/><rect x="942.1999999999999" y="702.8" width="1.3000000000000682" height="46.0" fill="#0000ff"/><rect x="958.5" y="553.5" width="1.3000000000000682" height="46.700000000000045" fill="#0000ff"/><rect x="958.5" y="702.8" width="1.3000000000000682" height="46.0" fill="#0000ff"/><rect x="811" y="702.8" width="15.299999999999955" height="46.0" fill="#ff0000"/><rect x="747.5" y="606.7" width="45" height="76.5" fill="#0000ff"/><rect x="755.7" y="614.6" width="28.299999999999955" height="24.0" fill="#000"/><rect x="755.7" y="651" width="28.299999999999955" height="24.399999999999977" fill="#ff0000"/><rect x="981.5" y="610.1" width="43.59999999999991" height="77.10000000000002" fill="#0000ff"/><rect x="990" y="618.6" width="28" height="24.399999999999977" fill="#ff0000"/><rect x="990" y="654.7" width="28" height="24.699999999999932" fill="#000"/><rect x="1028.9" y="550.6" width="209.0999999999999" height="193.5" fill="#008000"/><rect x="1039.4" y="558.5" width="10.700000000000045" height="48.5" fill="#000"/><rect x="1039.4" y="690.5" width="10.700000000000045" height="48.5" fill="#000"/><rect x="1055.5" y="558.5" width="10.700000000000045" height="48.5" fill="#000"/><rect x="1055.5" y="690.5" width="10.700000000000045" height="48.5" fill="#000"/><rect x="1071.6000000000001" y="558.5" width="10.700000000000045" height="48.5" fill="#000"/><rect x="1071.6000000000001" y="690.5" width="10.700000000000045" height="48.5" fill="#000"/><rect x="1087.7" y="558.5" width="10.700000000000045" height="48.5" fill="#000"/><rect x="1087.7" y="690.5" width="10.700000000000045" height="48.5" fill="#000"/><rect x="1103.8000000000002" y="558.5" width="10.700000000000045" height="48.5" fill="#000"/><rect x="1103.8000000000002" y="690.5" width="10.700000000000045" height="48.5" fill="#000"/><rect x="1119.9" y="558.5" width="10.700000000000045" height="48.5" fill="#000"/><rect x="1119.9" y="690.5" width="10.700000000000045" height="48.5" fill="#000"/><rect x="1136.0" y="558.5" width="10.700000000000045" height="48.5" fill="#000"/><rect x="1136.0" y="690.5" width="10.700000000000045" height="48.5" fill="#000"/><rect x="1152.1000000000001" y="558.5" width="10.700000000000045" height="48.5" fill="#000"/><rect x="1152.1000000000001" y="690.5" width="10.700000000000045" height="48.5" fill="#000"/><rect x="1168.2" y="558.5" width="10.700000000000045" height="48.5" fill="#000"/><rect x="1168.2" y="690.5" width="10.700000000000045" height="48.5" fill="#000"/><rect x="1184.3000000000002" y="558.5" width="10.700000000000045" height="48.5" fill="#000"/><rect x="1184.3000000000002" y="690.5" width="10.700000000000045" height="48.5" fill="#000"/><rect x="1200.4" y="558.5" width="10.700000000000045" height="48.5" fill="#000"/><rect x="1200.4" y="690.5" width="10.700000000000045" height="48.5" fill="#000"/><rect x="1216.5" y="558.5" width="10.700000000000045" height="48.5" fill="#ff0000"/><rect x="1216.5" y="690.5" width="10.700000000000045" height="48.5" fill="#000"/><rect x="1248.0" y="541.5" width="45.5" height="77.29999999999995" fill="#0000ff"/><rect x="1256.5" y="550" width="28.5" height="24.5" fill="#000"/><rect x="1256.5" y="586.2" width="28.5" height="24.799999999999955" fill="#ff0000"/><rect x="1248.0" y="670.9" width="45.5" height="77.20000000000005" fill="#0000ff"/><rect x="1256.5" y="679.4" width="28.5" height="24.399999999999977" fill="#ff0000"/><rect x="1256.5" y="715.5" width="28.5" height="24.5" fill="#000"/><rect x="1303.2" y="550.6" width="195.29999999999995" height="193.5" fill="#0000ff"/><rect x="1314.0" y="558.5" width="10.700000000000045" height="48.5" fill="#000"/><rect x="1314.0" y="690.5" width="10.700000000000045" height="48.5" fill="#000"/><rect x="1330.1" y="558.5" width="10.700000000000045" height="48.5" fill="#000"/><rect x="1330.1" y="690.5" width="10.700000000000045" height="48.5" fill="#000"/><rect x="1346.2" y="558.5" width="10.700000000000045" height="48.5" fill="#000"/><rect x="1346.2" y="690.5" width="10.700000000000045" height="48.5" fill="#000"/><rect x="1362.3" y="558.5" width="10.700000000000045" height="48.5" fill="#000"/><rect x="1362.3" y="690.5" width="10.700000000000045" height="48.5" fill="#000"/><rect x="1378.4" y="558.5" width="10.700000000000045" height="48.5" fill="#000"/><rect x="1378.4" y="690.5" width="10.700000000000045" height="48.5" fill="#000"/><rect x="1394.5" y="558.5" width="10.700000000000045" height="48.5" fill="#000"/><rect x="1394.5" y="690.5" width="10.700000000000045" height="48.5" fill="#000"/><rect x="721.5" y="340.3" width="64" height="128.0" fill="none" stroke="#000" stroke-width="3" stroke-linejoin="round"/><rect x="842.1" y="291.5" width="77.89999999999998" height="38.39999999999998" fill="none" stroke="#000" stroke-width="3" stroke-linejoin="round"/><rect x="809.8" y="336.0" width="95.30000000000007" height="132.89999999999998" fill="none" stroke="#000" stroke-width="3" stroke-linejoin="round"/><rect x="829.5" y="462.5" width="78" height="45.30000000000001" fill="none" stroke="#000" stroke-width="3" stroke-linejoin="round"/><rect x="989.6" y="291.5" width="45.39999999999998" height="37" fill="none" stroke="#000" stroke-width="3" stroke-linejoin="round"/><rect x="803.3" y="552.5" width="175.10000000000002" height="197.5" fill="none" stroke="#000" stroke-width="3" stroke-linejoin="round"/><rect x="747.5" y="606.7" width="45" height="76.5" fill="none" stroke="#000" stroke-width="3" stroke-linejoin="round"/><rect x="981.5" y="610.1" width="43.59999999999991" height="77.10000000000002" fill="none" stroke="#000" stroke-width="3" stroke-linejoin="round"/><rect x="1028.9" y="550.6" width="209.0999999999999" height="193.5" fill="none" stroke="#000" stroke-width="3" stroke-linejoin="round"/><rect x="1248.0" y="541.5" width="45.5" height="77.29999999999995" fill="none" stroke="#000" stroke-width="3" stroke-linejoin="round"/><rect x="1248.0" y="670.9" width="45.5" height="77.20000000000005" fill="none" stroke="#000" stroke-width="3" stroke-linejoin="round"/><rect x="1303.2" y="550.6" width="195.29999999999995" height="193.5" fill="none" stroke="#000" stroke-width="3" stroke-linejoin="round"/><text x="720.5" y="330.8" font-family="Liberation Sans" font-size="26.5" fill="#000" clip-path="url(#cv2)">TP31</text><text transform="translate(832.2,312.2) rotate(-90)" x="-19" y="0" font-family="Liberation Sans" font-size="26.5" fill="#000">C</text><text x="906.82" y="418.7" font-family="Liberation Sans" font-size="46.5" fill="#000">U13</text><text x="907.98" y="500.2" font-family="Liberation Sans" font-size="40.5" fill="#000" letter-spacing="0.8">C34</text><text x="988.70" y="354.6" font-family="Liberation Sans" font-size="26" fill="#000">C27</text><text x="1038.09" y="340.9" font-family="Liberation Sans" font-size="46.5" fill="#000" letter-spacing="-2.4">R24</text><text x="847.92" y="667" font-family="Liberation Sans" font-size="46.5" fill="#000" letter-spacing="-3">U21</text><text x="746.20" y="596.9" font-family="Liberation Sans" font-size="26" fill="#000" letter-spacing="-1.5">C51</text><text x="980.20" y="601.2" font-family="Liberation Sans" font-size="26" fill="#000" letter-spacing="-0.6">C52</text><text x="1103.52" y="536.4" font-family="Liberation Sans" font-size="46.5" fill="#000">U6</text><text x="1247.20" y="532.4" font-family="Liberation Sans" font-size="26" fill="#000" letter-spacing="-0.6">C16</text><text x="1247.20" y="661.6" font-family="Liberation Sans" font-size="26" fill="#000" letter-spacing="-0.6">C30</text><text x="1378.22" y="536.4" font-family="Liberation Sans" font-size="46.5" fill="#000">U</text></g></svg>
<div class="a" style="left:1405px;top:313px;width:16px;height:498px;background:#f0f0f0"></div>
<div class="a" style="left:1405px;top:430px;width:16px;height:162px;background:#c2c2c2"></div>
<div class="a" style="left:647px;top:811px;width:774px;height:16px;background:#f0f0f0"></div>
<div class="a" style="left:664px;top:811px;width:152px;height:16px;background:#c2c2c2"></div>
<svg style="left:0;top:0" width="1" height="1"><path d="M1409.5 324 L1413 320.5 L1416.5 324" fill="none" stroke="#606060" stroke-width="1.3"/><path d="M1409.5 799 L1413 802.5 L1416.5 799" fill="none" stroke="#606060" stroke-width="1.3"/><path d="M657.5 815.5 L654 819 L657.5 822.5" fill="none" stroke="#606060" stroke-width="1.3"/><path d="M1395 815.5 L1398.5 819 L1395 822.5" fill="none" stroke="#606060" stroke-width="1.3"/><rect x="1385.5" y="788.5" width="19" height="19" fill="#f0f0f0" stroke="#a8a8a8" stroke-width="1"/><circle cx="1394.5" cy="797.8" r="5.5" fill="#2a9a3a" stroke="#999" stroke-width="1"/><path d="M1392.5 795.5 L1396.5 799.5 M1392.5 795.5 H1395 M1392.5 795.5 V798" stroke="#fff" stroke-width="1.2"/></svg>
<div class="a" style="left:647px;top:827px;width:774px;height:24px;background:#0070c9"></div>
<div class="a" style="left:647px;top:852px;width:775px;height:2px;background:#b8b8b8"></div>
<div class="t" style="left:650.79px;top:834.35px;font-size:11.4px;line-height:11.4px;letter-spacing:0.006px;color:#fff">(0.4656 , 2.0654) Inches</div>
<div class="a" style="left:1314px;top:829px;width:56px;height:20px;background:#fff"></div>
<div class="a" style="left:1354px;top:829px;width:15px;height:20px;background:#f0f0f0;border:1px solid #adadad"></div>
<div class="t" style="left:1317.38px;top:833.42px;font-size:12.5px;line-height:12.5px;letter-spacing:-0.667px;color:#333">674%</div>
<svg style="left:0;top:0" width="1" height="1"><path d="M1358.5 835 L1361.5 832 L1364.5 835 M1358.5 842.5 L1361.5 845.5 L1364.5 842.5" fill="none" stroke="#777" stroke-width="1.1"/><rect x="1179.5" y="831.5" width="16" height="15.5" fill="none" stroke="#222" stroke-width="1" stroke-dasharray="2,1.2"/><path d="M1182 843.2 L1186 839.2" stroke="#c8a060" stroke-width="2.6" stroke-linecap="round"/><circle cx="1188" cy="836.7" r="4.2" fill="#d6ecfa" stroke="#7a8a9a" stroke-width="1"/><path d="M1207.5 845.9 L1211.5 841.9" stroke="#c8a060" stroke-width="2.6" stroke-linecap="round"/><circle cx="1213.5" cy="839.4" r="4.2" fill="#d6ecfa" stroke="#7a8a9a" stroke-width="1"/><path d="M1230 845.9 L1234 841.9" stroke="#c8a060" stroke-width="2.6" stroke-linecap="round"/><circle cx="1236" cy="839.4" r="4.2" fill="#d6ecfa" stroke="#7a8a9a" stroke-width="1"/><path d="M1248.5 845.5 L1252.5 841.5" stroke="#c8a060" stroke-width="2.6" stroke-linecap="round"/><circle cx="1254.5" cy="839" r="4.2" fill="#d6ecfa" stroke="#7a8a9a" stroke-width="1"/><path d="M1271.5 845.5 L1275.5 841.5" stroke="#c8a060" stroke-width="2.6" stroke-linecap="round"/><circle cx="1277.5" cy="839" r="4.2" fill="#d6ecfa" stroke="#7a8a9a" stroke-width="1"/><path d="M1377 845.5 L1381 841.5" stroke="#c8a060" stroke-width="2.6" stroke-linecap="round"/><circle cx="1383" cy="839" r="4.2" fill="#d6ecfa" stroke="#7a8a9a" stroke-width="1"/><path d="M1400 845.5 L1404 841.5" stroke="#c8a060" stroke-width="2.6" stroke-linecap="round"/><circle cx="1406" cy="839" r="4.2" fill="#d6ecfa" stroke="#7a8a9a" stroke-width="1"/><path d="M1162 837 V833.5 Q1162 829.5 1166 829.5 Q1169.5 829.5 1169.5 833.5 V835" fill="none" stroke="#d0d0d0" stroke-width="1.6"/><rect x="1157.5" y="837" width="10" height="9" fill="#e8b020" stroke="#555" stroke-width="0.6"/><path d="M1159 845 L1161.5 838.5 M1162 845 L1164.5 838.5 M1165 845 L1167 840" stroke="#222" stroke-width="0.9"/><path d="M1251.5 833.8 H1256.5 M1258.5 833.8 H1264 M1279.6 833.8 H1287" stroke="#222" stroke-width="1.8"/><path d="M1387 835.2 H1393.5 M1390.2 832 V838.5" stroke="#555" stroke-width="1.9"/><path d="M1401.5 833.7 H1407.5 M1404.5 830.7 V836.7 M1409.5 833.7 H1415.5 M1412.5 830.7 V836.7" stroke="#000" stroke-width="1.7"/></svg>
<div class="t" style="left:1201.95px;top:829.85px;font-size:8.8px;line-height:8.8px;letter-spacing:0.360px;font-weight:bold;color:#3c3c3c">100</div>
<div class="t" style="left:1225.19px;top:829.85px;font-size:8.8px;line-height:8.8px;letter-spacing:-1.216px;font-weight:bold;color:#3c3c3c">ALL</div>
</body></html>
